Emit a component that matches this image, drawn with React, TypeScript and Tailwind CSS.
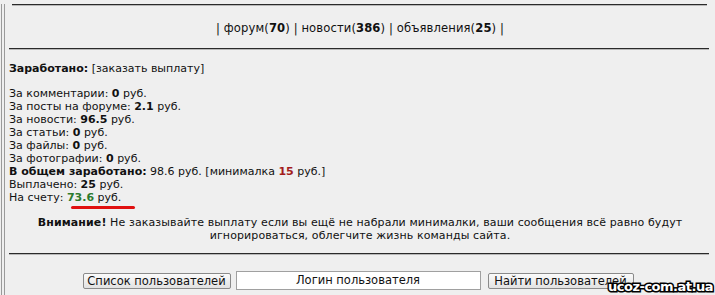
import React from 'react';

const earnings = [
  { label: 'За комментарии:', value: '0' },
  { label: 'За посты на форуме:', value: '2.1' },
  { label: 'За новости:', value: '96.5' },
  { label: 'За статьи:', value: '0' },
  { label: 'За файлы:', value: '0' },
  { label: 'За фотографии:', value: '0' },
];

function Rule({ className = '' }: { className?: string }) {
  return <div className={`h-[2px] border-t border-t-[#2a2a2a] border-b border-b-[#b8b8b8] ${className}`} />;
}

export default function App() {
  return (
    <div className="relative h-[295px] w-[715px] overflow-hidden bg-[#efefef] font-['DejaVu_Sans',Verdana,sans-serif] text-[11px] leading-[13px] text-[#111]">
      <div className="ml-[1px] h-full border-l-[4px] border-double border-l-[#9a9a9a]">
        <Rule className="mt-[4px] ml-[7px] w-[695px]" />

        <div className="flex h-[42px] items-center justify-center pt-[3px] text-[11.6px] tracking-[0.1px]">
          | форум(<b>70</b>) | новости(<b>386</b>) | объявления(<b>25</b>) |
        </div>

        <Rule className="ml-[4px] w-[700px]" />

        <div className="pl-[4px] pt-[12px]">
          <div>
            <b>Заработано:</b> [заказать выплату]
          </div>

          <div className="mt-[12px]">
            {earnings.map((row) => (
              <div key={row.label}>
                {row.label} <b>{row.value}</b> руб.
              </div>
            ))}
            <div>
              <b>В общем заработано:</b> 98.6 руб. [минималка <b className="text-[#a31c1c]">15</b> руб.]
            </div>
            <div>
              Выплачено: <b>25</b> руб.
            </div>
            <div>
              На счету: <b className="text-[#2d7a2d]">73.6</b> руб.
            </div>
            <div className="ml-[62px] mt-[2px] h-[3px] w-[64px] rounded-full bg-[#e01010]" />
          </div>

          <div className="mt-[7px] pr-[4px] text-center tracking-[0.1px]">
            <b>Внимание!</b> Не заказывайте выплату если вы ещё не набрали минималки, ваши сообщения всё равно будут
            <br />
            игнорироваться, облегчите жизнь команды сайта.
          </div>
        </div>

        <Rule className="mt-[11px] ml-[4px] w-[700px]" />

        <div className="mt-[16px] flex items-center justify-center gap-[5px] pr-[4px] font-['DejaVu_Sans',sans-serif] text-[11.5px]">
          <button className="h-[16px] w-[148px] rounded-[2px] border border-[#8a8a8a] bg-gradient-to-b from-[#fbfbfb] to-[#e2e2e2] leading-[14px] text-[#111]">
            Список пользователей
          </button>
          <div className="flex h-[19px] w-[245px] items-center justify-center border border-[#a0a0a0] bg-white text-[#111]">
            Логин пользователя
          </div>
          <button className="ml-[2px] h-[16px] w-[146px] rounded-[2px] border border-[#8a8a8a] bg-gradient-to-b from-[#fbfbfb] to-[#e2e2e2] leading-[14px] text-[#111]">
            Найти пользователей
          </button>
        </div>
      </div>

      <div className="absolute bottom-[2px] right-[2px] font-['DejaVu_Sans',sans-serif] text-[13px] font-bold leading-[13px] tracking-[-0.5px] text-white [-webkit-text-stroke:3px_#000] [paint-order:stroke_fill]">
        ucoz-com.at.ua
      </div>
    </div>
  );
}
